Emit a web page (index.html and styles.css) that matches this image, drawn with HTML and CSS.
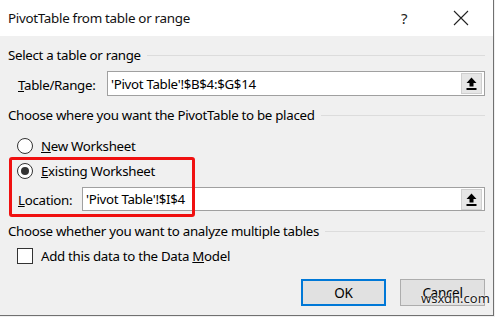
FILE: index.html
```html
<!DOCTYPE html>
<html>
<head>
<meta charset="utf-8">
<link rel="stylesheet" href="styles.css">
</head>
<body>
<div class="dialog">
  <div class="titlebar">
    <div class="title">PivotTable from table or range</div>
    <div class="help">?</div>
    <div class="close">
      <svg width="16" height="16" viewBox="0 0 16 16"><path d="M1 1 L15 15 M15 1 L1 15" stroke="#222" stroke-width="1.1" fill="none"/></svg>
    </div>
  </div>
  <div class="content">
    <div class="group-header h1"><span>Select a table or range</span><div class="rule"></div></div>
    <div class="field-row range-row">
      <label class="range-label"><u>T</u>able/Range:</label>
      <div class="input tall">
        <span class="value">'Pivot Table'!$B$4:$G$14</span>
        <div class="pick">
          <svg width="11" height="13" viewBox="0 0 11 13"><path d="M5.5 0.5 L10.5 6 L7.5 6 L7.5 9.5 L3.5 9.5 L3.5 6 L0.5 6 Z" fill="#000"/><rect x="0.5" y="11" width="10" height="2" fill="#000"/></svg>
        </div>
      </div>
    </div>
    <div class="group-header h2"><span>Choose where you want the PivotTable to be placed</span><div class="rule"></div></div>
    <div class="option r1"><span class="radio"></span><span><u>N</u>ew Worksheet</span></div>
    <div class="option r2"><span class="radio checked"></span><span><u>E</u>xisting Worksheet</span></div>
    <div class="field-row loc-row">
      <label class="loc-label"><u>L</u>ocation:</label>
      <div class="input short">
        <span class="value">'Pivot Table'!$I$4</span>
        <div class="pick">
          <svg width="11" height="13" viewBox="0 0 11 13"><path d="M5.5 0.5 L10.5 6 L7.5 6 L7.5 9.5 L3.5 9.5 L3.5 6 L0.5 6 Z" fill="#000"/><rect x="0.5" y="11" width="10" height="2" fill="#000"/></svg>
        </div>
      </div>
    </div>
    <div class="group-header h3"><span>Choose whether you want to analyze multiple tables</span><div class="rule"></div></div>
    <div class="option c1"><span class="checkbox"></span><span>Add this data to the Data <u>M</u>odel</span></div>
    <div class="buttons">
      <div class="btn ok">OK</div>
      <div class="btn cancel">Cancel</div>
    </div>
  </div>
  <div class="highlight"></div>
  <div class="watermark">wsxdn.com</div>
</div>
</body>
</html>
```

FILE: styles.css
```css
html, body {
  margin: 0;
  padding: 0;
  background: #f0f0f0;
}
body {
  font-family: "Noto Sans", "Open Sans", sans-serif;
  font-size: 13.3px;
  letter-spacing: -0.3px;
  color: #000;
}
.dialog {
  position: relative;
  width: 493px;
  height: 315px;
  background: #f0f0f0;
  border-right: 1px solid #707070;
  border-bottom: 1px solid #707070;
  overflow: hidden;
}
.titlebar {
  height: 36px;
  background: #fff;
  display: flex;
  align-items: center;
  padding-left: 8px;
}
.title {
  font-size: 13.4px;
  flex: 1;
  color: #111;
}
.help {
  width: 20px;
  font-size: 15px;
  color: #222;
  margin-right: 39px;
  text-align: center;
}
.close {
  width: 16px;
  height: 16px;
  margin-right: 24px;
  display: flex;
}
.content {
  padding: 0 8px 0 8px;
  display: flex;
  flex-direction: column;
}
.group-header {
  height: 20px;
  display: flex;
  align-items: center;
  gap: 6px;
}
.group-header .rule {
  flex: 1;
  height: 1px;
  background: #dcdcdc;
}
.h1 { margin-top: 9px; }
.h2 { margin-top: 9px; }
.h3 { margin-top: 10px; }
.field-row {
  display: flex;
  align-items: center;
}
.range-row { margin-top: 6px; padding-left: 10px; }
.range-label { width: 89px; padding-top: 2px; }
.loc-row { margin-top: 6px; padding-left: 10px; }
.loc-label { width: 64px; padding-top: 2px; }
.input {
  flex: 1;
  background: #fff;
  border: 1px solid #a0a0a0;
  display: flex;
  align-items: center;
  padding-left: 3px;
  box-sizing: border-box;
}
.input.tall { height: 25px; }
.input.short { height: 24px; }
.input .value { flex: 1; }
.pick {
  width: 19px;
  height: 19px;
  margin-right: 2px;
  background: #e6e6e6;
  border: 1px solid #cfcfcf;
  display: flex;
  align-items: center;
  justify-content: center;
}
.option {
  display: flex;
  align-items: center;
  height: 20px;
  padding-left: 9px;
}
.r1 { margin-top: 11px; }
.r2 { margin-top: 5px; }
.c1 { margin-top: 5px; }
.radio {
  width: 14px;
  height: 14px;
  border: 1px solid #333;
  border-radius: 50%;
  background: #fff;
  margin-right: 8px;
  position: relative;
  flex: none;
}
.radio.checked::after {
  content: "";
  position: absolute;
  left: 3px;
  top: 3px;
  width: 8px;
  height: 8px;
  border-radius: 50%;
  background: #333;
}
.checkbox {
  width: 14px;
  height: 14px;
  border: 1px solid #333;
  background: #fff;
  margin-right: 8px;
  flex: none;
}
.buttons {
  display: flex;
  justify-content: flex-end;
  gap: 14px;
  margin-top: 13px;
}
.btn {
  width: 85px;
  height: 27px;
  box-sizing: border-box;
  background: #e1e1e1;
  display: flex;
  align-items: center;
  justify-content: center;
  font-size: 13.5px;
}
.btn.ok { border: 2px solid #0078d7; }
.btn.cancel { border: 1px solid #adadad; }
.highlight {
  position: absolute;
  left: 9px;
  top: 157px;
  width: 186px;
  height: 60px;
  box-sizing: border-box;
  border: 3px solid #f01010;
  border-radius: 3px;
}
.watermark {
  position: absolute;
  left: 421px;
  top: 289px;
  font-size: 13px;
  letter-spacing: 0;
  color: #222;
  text-shadow: 0 0 2px #fff, 0 0 2px #fff;
}
```
